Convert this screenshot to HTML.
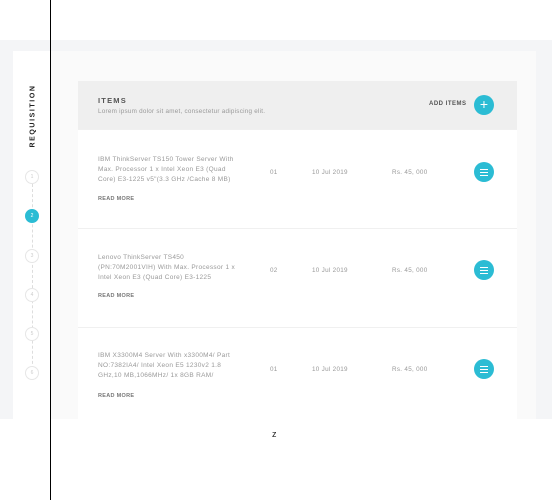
<!DOCTYPE html>
<html><head><style>
*{margin:0;padding:0;box-sizing:border-box}
body{width:552px;height:502px;position:relative;background:#fff;font-family:"Liberation Sans",sans-serif;overflow:hidden}
.gray{position:absolute;left:0;top:40px;width:552px;height:379px;background:#f4f5f7}
.card{position:absolute;left:13px;top:51px;width:523px;height:368px;background:#fafafa}
.side{position:absolute;left:13px;top:51px;width:37px;height:368px;background:#fff}
.vline{position:absolute;left:50px;top:0;width:1px;height:500px;background:#000}
.req{position:absolute;left:33px;top:116px;transform:translate(-50%,-50%) rotate(-90deg);font-size:7px;font-weight:bold;letter-spacing:1.6px;color:#222;white-space:nowrap}
.step{position:absolute;left:25px;width:14px;height:14px;border-radius:50%;border:1px solid #e6e6e6;background:#fff;color:#ccc;font-size:5px;text-align:center;line-height:12px}
.step.on{background:#2bbcd4;border-color:#2bbcd4;color:#fff}
.dash{position:absolute;left:32px;top:184px;height:190px;border-left:1px dashed #ddd}
.panel{position:absolute;left:78px;top:81px;width:439px;height:338px;background:#fff}
.head{position:absolute;left:0;top:0;width:439px;height:48px;background:#efefef}
.h1{position:absolute;left:20px;top:15px;font-size:7.5px;font-weight:bold;letter-spacing:1.2px;color:#555}
.h2{position:absolute;left:20px;top:27px;font-size:6.3px;letter-spacing:.25px;color:#999;white-space:nowrap}
.add{position:absolute;left:351px;top:20px;font-size:6px;font-weight:bold;color:#555;letter-spacing:.5px}
.btn{position:absolute;width:20px;height:20px;border-radius:50%;background:#2bbcd4;color:#fff;text-align:center}
.row{position:absolute;left:0;width:439px;height:99px;border-top:1px solid #f0f0f0}
.desc{position:absolute;left:20px;font-size:6.5px;letter-spacing:.3px;line-height:10px;color:#999;width:142px}
.rm{position:absolute;left:20px;font-size:5.5px;letter-spacing:.3px;font-weight:bold;color:#777}
.c{position:absolute;font-size:6.3px;letter-spacing:.3px;color:#999}
.ham{position:absolute;left:6px;width:8px;height:1px;background:#fff}
.z{position:absolute;left:272px;top:429px;font-size:9px;color:#222}
</style></head><body>
<div class="gray"></div>
<div class="card"></div>
<div class="side"></div>
<div class="req">REQUISITION</div>
<div class="dash"></div>
<div class="step" style="top:170px">1</div>
<div class="step on" style="top:209px">2</div>
<div class="step" style="top:249px">3</div>
<div class="step" style="top:288px">4</div>
<div class="step" style="top:327px">5</div>
<div class="step" style="top:366px">6</div>
<div class="panel">
<div class="head">
<div class="h1">ITEMS</div>
<div class="h2">Lorem ipsum dolor sit amet, consectetur adipiscing elit.</div>
<div class="add">ADD ITEMS</div>
<div class="btn" style="left:396px;top:14px;font-size:14px;line-height:19px">+</div>
</div>
<div class="row" style="top:48px">
<div class="desc" style="top:25px">IBM ThinkServer TS150 Tower Server With Max. Processor 1 x Intel Xeon E3 (Quad Core) E3-1225 v5"(3.3 GHz /Cache 8 MB)</div>
<div class="rm" style="top:66px">READ MORE</div>
<div class="c" style="left:192px;top:39px">01</div><div class="c" style="left:234px;top:39px">10 Jul 2019</div><div class="c" style="left:314px;top:39px">Rs. 45, 000</div>
<div class="btn" style="left:396px;top:32px"><div class="ham" style="top:7px"></div><div class="ham" style="top:10px"></div><div class="ham" style="top:13px"></div></div>
</div>
<div class="row" style="top:147px">
<div class="desc" style="top:24px">Lenovo ThinkServer TS450 (PN:70M2001VIH) With Max. Processor 1 x Intel Xeon E3 (Quad Core) E3-1225</div>
<div class="rm" style="top:64px">READ MORE</div>
<div class="c" style="left:192px;top:38px">02</div><div class="c" style="left:234px;top:38px">10 Jul 2019</div><div class="c" style="left:314px;top:38px">Rs. 45, 000</div>
<div class="btn" style="left:396px;top:31px"><div class="ham" style="top:7px"></div><div class="ham" style="top:10px"></div><div class="ham" style="top:13px"></div></div>
</div>
<div class="row" style="top:246px;height:92px">
<div class="desc" style="top:23px">IBM X3300M4 Server With x3300M4/ Part NO:7382IA4/ Intel Xeon E5 1230v2 1.8 GHz,10 MB,1066MHz/ 1x 8GB RAM/</div>
<div class="rm" style="top:65px">READ MORE</div>
<div class="c" style="left:192px;top:38px">01</div><div class="c" style="left:234px;top:38px">10 Jul 2019</div><div class="c" style="left:314px;top:38px">Rs. 45, 000</div>
<div class="btn" style="left:396px;top:31px"><div class="ham" style="top:7px"></div><div class="ham" style="top:10px"></div><div class="ham" style="top:13px"></div></div>
</div>
</div>
<div class="vline"></div>
<div class="z">z</div>
</body></html>
